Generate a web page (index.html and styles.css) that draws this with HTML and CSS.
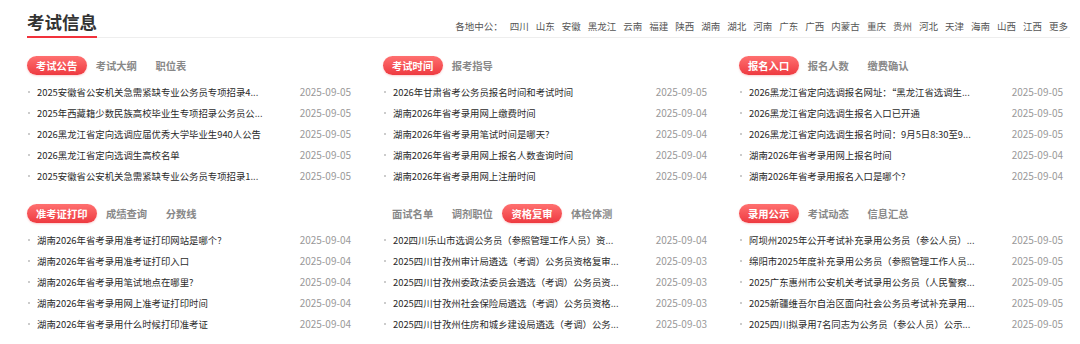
FILE: index.html
```html
<!doctype html>
<html>
<head>
<meta charset="utf-8">
<link rel="stylesheet" href="styles.css">
</head>

<body>
<div class="wrap">
	<div class="head">
		<h2 class="title">考试信息</h2>
		<div class="area">
			<span>各地中公：</span>
			<a href="javascript:;">四川</a>
			<a href="javascript:;">山东</a>
			<a href="javascript:;">安徽</a>
			<a href="javascript:;">黑龙江</a>
			<a href="javascript:;">云南</a>
			<a href="javascript:;">福建</a>
			<a href="javascript:;">陕西</a>
			<a href="javascript:;">湖南</a>
			<a href="javascript:;">湖北</a>
			<a href="javascript:;">河南</a>
			<a href="javascript:;">广东</a>
			<a href="javascript:;">广西</a>
			<a href="javascript:;">内蒙古</a>
			<a href="javascript:;">重庆</a>
			<a href="javascript:;">贵州</a>
			<a href="javascript:;">河北</a>
			<a href="javascript:;">天津</a>
			<a href="javascript:;">海南</a>
			<a href="javascript:;">山西</a>
			<a href="javascript:;">江西</a>
			<a href="javascript:;">更多</a>
		</div>
	</div>

	<div class="grid">
		<div class="box">
			<div class="tabs"><span class="cur">考试公告</span><span>考试大纲</span><span>职位表</span></div>
			<ul>
				<li><a href="javascript:;">2025安徽省公安机关急需紧缺专业公务员专项招录4...</a><em>2025-09-05</em></li>
				<li><a href="javascript:;">2025年西藏籍少数民族高校毕业生专项招录公务员公...</a><em>2025-09-05</em></li>
				<li><a href="javascript:;">2026黑龙江省定向选调应届优秀大学毕业生940人公告</a><em>2025-09-05</em></li>
				<li><a href="javascript:;">2026黑龙江省定向选调生高校名单</a><em>2025-09-05</em></li>
				<li><a href="javascript:;">2025安徽省公安机关急需紧缺专业公务员专项招录1...</a><em>2025-09-05</em></li>
			</ul>
		</div>
		<div class="box">
			<div class="tabs"><span class="cur">考试时间</span><span>报考指导</span></div>
			<ul>
				<li><a href="javascript:;">2026年甘肃省考公务员报名时间和考试时间</a><em>2025-09-05</em></li>
				<li><a href="javascript:;">湖南2026年省考录用网上缴费时间</a><em>2025-09-04</em></li>
				<li><a href="javascript:;">湖南2026年省考录用笔试时间是哪天?</a><em>2025-09-04</em></li>
				<li><a href="javascript:;">湖南2026年省考录用网上报名人数查询时间</a><em>2025-09-04</em></li>
				<li><a href="javascript:;">湖南2026年省考录用网上注册时间</a><em>2025-09-04</em></li>
			</ul>
		</div>
		<div class="box">
			<div class="tabs"><span class="cur">报名入口</span><span>报名人数</span><span>缴费确认</span></div>
			<ul>
				<li><a href="javascript:;">2026黑龙江省定向选调报名网址：“黑龙江省选调生...</a><em>2025-09-05</em></li>
				<li><a href="javascript:;">2026黑龙江省定向选调生报名入口已开通</a><em>2025-09-05</em></li>
				<li><a href="javascript:;">2026黑龙江省定向选调生报名时间：9月5日8:30至9...</a><em>2025-09-05</em></li>
				<li><a href="javascript:;">湖南2026年省考录用网上报名时间</a><em>2025-09-04</em></li>
				<li><a href="javascript:;">湖南2026年省考录用报名入口是哪个?</a><em>2025-09-04</em></li>
			</ul>
		</div>
		<div class="box">
			<div class="tabs"><span class="cur">准考证打印</span><span>成绩查询</span><span>分数线</span></div>
			<ul>
				<li><a href="javascript:;">湖南2026年省考录用准考证打印网站是哪个?</a><em>2025-09-04</em></li>
				<li><a href="javascript:;">湖南2026年省考录用准考证打印入口</a><em>2025-09-04</em></li>
				<li><a href="javascript:;">湖南2026年省考录用笔试地点在哪里?</a><em>2025-09-04</em></li>
				<li><a href="javascript:;">湖南2026年省考录用网上准考证打印时间</a><em>2025-09-04</em></li>
				<li><a href="javascript:;">湖南2026年省考录用什么时候打印准考证</a><em>2025-09-04</em></li>
			</ul>
		</div>
		<div class="box">
			<div class="tabs"><span>面试名单</span><span>调剂职位</span><span class="cur">资格复审</span><span>体检体测</span></div>
			<ul>
				<li><a href="javascript:;">202四川乐山市选调公务员（参照管理工作人员）资...</a><em>2025-09-04</em></li>
				<li><a href="javascript:;">2025四川甘孜州审计局遴选（考调）公务员资格复审...</a><em>2025-09-03</em></li>
				<li><a href="javascript:;">2025四川甘孜州委政法委员会遴选（考调）公务员资...</a><em>2025-09-03</em></li>
				<li><a href="javascript:;">2025四川甘孜州社会保险局遴选（考调）公务员资格...</a><em>2025-09-03</em></li>
				<li><a href="javascript:;">2025四川甘孜州住房和城乡建设局遴选（考调）公务...</a><em>2025-09-03</em></li>
			</ul>
		</div>
		<div class="box">
			<div class="tabs"><span class="cur">录用公示</span><span>考试动态</span><span>信息汇总</span></div>
			<ul>
				<li><a href="javascript:;">阿坝州2025年公开考试补充录用公务员（参公人员）...</a><em>2025-09-05</em></li>
				<li><a href="javascript:;">绵阳市2025年度补充录用公务员（参照管理工作人员...</a><em>2025-09-05</em></li>
				<li><a href="javascript:;">2025广东惠州市公安机关考试录用公务员（人民警察...</a><em>2025-09-05</em></li>
				<li><a href="javascript:;">2025新疆维吾尔自治区面向社会公务员考试补充录用...</a><em>2025-09-05</em></li>
				<li><a href="javascript:;">2025四川拟录用7名同志为公务员（参公人员）公示...</a><em>2025-09-05</em></li>
			</ul>
		</div>
	</div>
</div>
</body>
</html>
```

FILE: styles.css
```css
*{
	margin:0; padding:0; list-style:none;
}
body{
	background:#fff; font-family:"Noto Sans CJK SC","Microsoft YaHei",sans-serif; color:#333;
}
a{ color:inherit; text-decoration:none; }
em{ font-style:normal; }

.wrap{
	width:1043px; margin-left:27px;
}
.head{
	display:flex; justify-content:space-between; align-items:flex-start;
	height:37px; border-bottom:1px solid #eee;
}
	.title{
		height:38px; padding-top:9px; box-sizing:border-box; line-height:26px;
		font-size:17.5px; font-weight:bold; color:#333;
		border-bottom:2px solid #f2323c; margin-bottom:-1px;
	}
	.area{
		display:flex; gap:7px; padding-top:19px; padding-right:2px;
		font-size:9.5px; line-height:14px; color:#555;
	}

.grid{
	display:grid; grid-template-columns:repeat(3,331px); column-gap:25px; row-gap:18px;
	padding-top:18px;
}
	.tabs{
		display:flex; height:19px; margin-bottom:6px;
	}
	.tabs span{
		padding:0 9.5px 0 9px; line-height:19px; font-size:10.3px; font-weight:bold; color:#888;
		border-radius:10px;
	}
	.tabs .cur{
		color:#fff; background:linear-gradient(to bottom,#ff7070,#ee3a40);
		box-shadow:0 1px 2px rgba(238,58,64,.25);
	}
	.box li{
		display:flex; align-items:center; height:21px; padding:0 7px 0 10px;
		position:relative; font-size:9.4px;
	}
	.box li:before{
		content:''; position:absolute; left:1px; top:10px;
		width:2px; height:2px; background:#ccc;
	}
	.box li a{
		width:232px; white-space:nowrap; overflow:hidden; text-overflow:ellipsis; color:#2a2a2a;
	}
	.box li em{
		margin-left:auto; font-size:10px; color:#999;
	}
```
